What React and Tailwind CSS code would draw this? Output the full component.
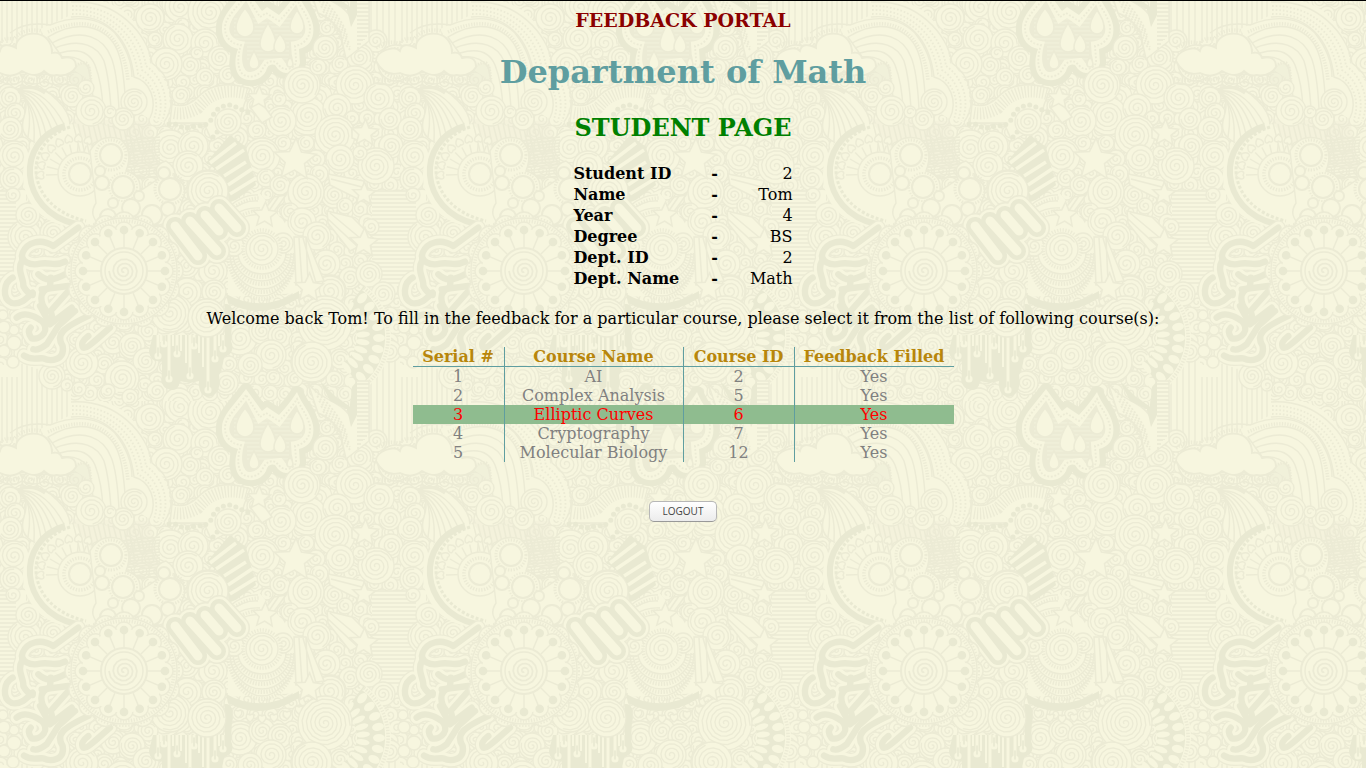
import React from "react";

const BASE = "#f7f6df";
const LINE = "#ecebd5";
const DEEP = "#e9e9d2";

const spirals = [
  [150, 17, 14], [180, 6, 15], [210, 11, 22], [155, 38, 7], [182, 24, 7], [178, 38, 15], [205, 42, 14],
  [190, 64, 11], [166, 63, 16], [220, 57, 12], [205, 76, 9], [228, 74, 9], [197, 52, 6], [183, 81, 7], [181, 94, 9],
  [205, 92, 8], [222, 88, 6],
  [325, 45, 13], [327, 27, 8], [376, 40, 11], [340, 63, 8], [360, 56, 13], [316, 66, 9], [336, 82, 7],
  [302, 82, 19], [355, 84, 19], [379, 97, 15], [318, 96, 14], [308, 115, 19], [337, 107, 14], [281, 120, 15],
  [279, 98, 7], [390, 118, 11], [352, 117, 7], [391, 145, 12], [376, 165, 18], [335, 134, 20], [257, 129, 9],
  [283, 142, 8], [306, 142, 8], [237, 137, 11], [262, 155, 18], [340, 158, 14], [316, 158, 9], [360, 152, 7],
  [266, 177, 9], [280, 184, 10], [319, 173, 9], [334, 194, 13], [306, 191, 18], [267, 193, 6], [290, 211, 9],
  [302, 221, 14], [317, 235, 14], [345, 205, 8], [371, 226, 8], [283, 242, 11], [234, 245, 11], [345, 262, 8],
  [326, 263, 14], [350, 277, 11], [369, 273, 13], [383, 293, 12], [330, 290, 16], [228, 285, 8], [213, 270, 14],
  [187, 265, 12], [187, 291, 14], [214, 291, 12], [10, 97, 11], [15, 112, 10], [10, 128, 12], [14, 155, 15],
  [12, 178, 12], [13, 194, 7], [25, 236, 17], [53, 232, 13], [28, 214, 12], [170, 147, 18], [193, 145, 15],
  [188, 165, 15], [190, 208, 10], [208, 190, 21], [173, 313, 20], [165, 319, 17], [148, 330, 10], [207, 317, 19],
  [240, 337, 17], [262, 330, 13], [280, 335, 12], [298, 340, 9], [271, 354, 15], [250, 364, 12], [229, 363, 8],
  [226, 382, 12], [298, 347, 7], [312, 361, 21], [295, 378, 8], [340, 358, 10], [334, 378, 8], [273, 376, 7],
  [113, 341, 12], [132, 345, 13], [146, 360, 13], [104, 363, 10], [82, 362, 16], [52, 375, 13], [67, 384, 6],
  [79, 388, 7], [122, 377, 17], [108, 390, 7], [130, 396, 8], [145, 384, 7], [157, 390, 10], [178, 403, 16], [390, 350, 11],
];

const stars = [
  [259, 97, 12], [365, 132, 14], [295, 159, 22], [364, 193, 12], [265, 214, 13], [364, 242, 15], [309, 287, 15],
];

const bubbles = [
  [111, 154, 11], [123, 186, 11], [102, 182, 7], [100, 170, 5], [131, 207, 9], [113, 202, 5],
  [108, 216, 8], [139, 195, 5], [152, 214, 10], [168, 208, 7], [170, 188, 11], [164, 172, 6],
];

const hearts = Array.from({ length: 12 }, (_, i) => 88 + i * 16);

const tubes = [
  "M235 50 L160 105 C120 80 80 95 68 125 C58 150 90 165 120 158 C150 152 165 168 195 152",
  "M38 200 C10 215 5 262 35 276 C62 282 80 262 98 245",
  "M68 145 C48 180 72 200 70 225 Q80 245 98 252",
  "M115 190 C140 215 165 205 195 190",
  "M152 200 L150 230 C112 240 122 280 140 300",
  "M50 320 C70 302 100 312 125 330 C152 355 125 388 95 382 Q80 362 92 350",
  "M205 240 L152 300 L160 330",
  "M125 235 L205 225",
  "M120 285 L150 340 L215 290",
  "M265 315 C190 350 165 370 188 405 C195 450 150 452 130 442 C110 440 95 450 72 434",
  "M225 300 L175 345 L140 400 Q115 420 100 415",
  "M330 350 C290 385 260 415 250 410 Q238 395 265 375",
];

const fingers = "M175 225L198 255M190 220L217 250M205 214L219 230M219 207L237 227";

const drips = [[158, 355], [164, 343], [169, 378], [177, 353], [190, 375], [194, 345], [208, 389], [215, 358], [223, 348]];

const drops = [[245, 27, 9, 7], [297, 26, 7, 9], [268, 43, 8, 22], [280, 46, 6, 33], [254, 63, 5, 50], [290, 63, 3, 56]];

function spiralPath(cx, cy, r) {
  const pitch = r > 12 ? 4.3 : 3.6;
  const turns = (r - 1) / pitch;
  const steps = Math.ceil(turns * 14);
  const start = (cx * 7 + cy * 3) % 6;
  let d = "";
  for (let i = 3; i <= steps; i++) {
    const t = (i / 14) * Math.PI * 2;
    const q = Math.min(r, (t / (Math.PI * 2)) * pitch);
    d += `${d ? "L" : "M"}${(cx + q * Math.cos(t + start)).toFixed(1)} ${(cy + q * Math.sin(t + start)).toFixed(1)}`;
  }
  return d;
}

function starPath(cx, cy, r) {
  return (
    Array.from({ length: 10 }, (_, i) => {
      const a = -Math.PI / 2 + (i * Math.PI) / 5 + 0.05;
      const q = i % 2 ? r * 0.46 : r;
      return `${i ? "L" : "M"}${(cx + q * Math.cos(a)).toFixed(1)} ${(cy + q * Math.sin(a)).toFixed(1)}`;
    }).join("") + "Z"
  );
}

function Spiral({ c: [x, y, r] }) {
  return (
    <g fill={BASE} stroke={LINE} strokeWidth="1.3">
      <circle cx={x} cy={y} r={r} />
      <path d={spiralPath(x, y, r - 1)} fill="none" />
    </g>
  );
}

function Filler() {
  const items = [];
  for (let row = 0; row < 31; row++) {
    for (let col = 0; col < 27; col++) {
      items.push([col * 15 + (row % 2 ? 7 : 0), row * 13 + ((col * 5) % 4), 8]);
    }
  }
  return items.map((c) => <Spiral key={c.join()} c={c} />);
}

function Stripes() {
  const vertical = [];
  for (let x = 2; x < 72; x += 5) vertical.push(x);
  const horizontal = [];
  for (let y = 190; y < 286; y += 4) horizontal.push(y);
  return (
    <g stroke={LINE} strokeWidth="1.3">
      <path fill={BASE} stroke="none" d="M0 0H71V42H0ZM0 364H20V352L60 362 71 390V400H0ZM369 0H400V45H369ZM369 345H400V400H369ZM0 190H26V285H0ZM372 190H400V285H372Z" />
      {vertical.map((x) => (
        <path key={x} d={`M${x} 0V42M${x} ${x < 20 ? 376 : 362 + (x - 20) / 3}V400`} />
      ))}
      {[371, 377, 383, 389, 395].map((x) => (
        <path key={x} d={`M${x} 0V45M${x} 350V400`} />
      ))}
      {horizontal.map((y) => (
        <path key={y} d={`M0 ${y}H${y < 240 ? 16 : 20}M372 ${y}H400`} />
      ))}
    </g>
  );
}

function Rainbow() {
  return (
    <g fill="none" stroke={LINE} strokeWidth="1.4">
      <path fill={BASE} stroke="none" d="M71 0H100C132 6 148 36 150 62C168 76 176 100 164 122L146 116 60 60 40 28 71 14Z" />
      <path d="M71 1C118 -2 148 34 152 62C170 74 178 102 164 121" />
      <path d="M71 16C108 12 130 40 134 76C150 80 158 100 150 117" />
      {["M72 5C116 4 142 36 146 65C164 77 170 102 162 120", "M72 9C112 8 138 38 142 69C158 79 165 102 158 119", "M72 13C110 11 134 40 138 73C154 82 160 102 154 118"].map((d) => (
        <path key={d} d={d} strokeDasharray="1.6 2" strokeWidth="1.8" />
      ))}
      <path d="M10 32Q25 20 50 24Q90 8 115 32Q132 54 132 76" />
      <path d="M48 31Q90 12 112 37Q126 54 128 80" strokeWidth="3.5" strokeDasharray="1.2 1.5" />
      <path fill={BASE} d="M48 36C84 14 112 30 119 54Q124 68 126 110H94Q92 80 88 66Q80 54 62 56Z" />
      <path d="M52 42C84 25 104 38 111 56Q117 70 119 108M55 47C82 36 98 46 104 60Q109 76 111 108M60 52C80 46 90 52 95 64Q102 82 103 108" />
      <path fill={LINE} d="M72 70Q80 58 90 66L91 88Q78 90 70 78Z" opacity=".5" />
      <path d="M68 76Q76 60 86 62Q91 66 91 86" strokeWidth="3" strokeDasharray="1.2 1.5" />
      <path fill={BASE} d="M-24 60C-24 50 -6 44 0 50Q2 40 16 47C14 30 52 24 52 52Q60 50 62 57Q76 54 76 66Q70 76 56 74Q50 76 44 70Q36 78 22 70Q12 78 0 72Q-16 76 -24 60Z" strokeWidth="1.8" />
      <path d="M-26 77Q-10 82 0 76Q12 82 22 75Q36 82 44 75Q58 82 70 76" strokeWidth="3.5" strokeDasharray="1.2 1.5" />
      <path d="M-26 82Q-10 86 0 80Q12 87 22 80Q34 86 44 80Q60 88 70 80" />
      <path d="M-24 47Q-12 38 0 43Q2 36 14 38Q24 26 42 30" strokeWidth="3.5" strokeDasharray="1.2 1.5" />
    </g>
  );
}

function Swirl() {
  return (
    <g fill={BASE} stroke={LINE} strokeWidth="1.4">
      <path d="M18 88Q40 80 58 100Q70 112 70 124L36 142Q18 134 24 116Q30 96 18 88Z" />
      <path fill="none" d="M18 90Q44 86 64 123M18 90Q40 88 58 126M18 90Q40 94 52 129M18 91Q38 98 46 133M20 92Q36 104 41 137M22 95Q36 108 34 140M26 98Q32 112 28 136M20 86Q52 84 68 110" />
      <path fill="none" strokeWidth="3" d="M18 89Q32 83 45 92" />
    </g>
  );
}

function Gear() {
  return (
    <g stroke={LINE} fill={BASE} strokeWidth="1.4">
      <path stroke="none" d="M66 124A48 48 0 0 0 82 225L120 215 125 130 90 120Z" />
      <path fill={LINE} stroke="none" opacity=".35" d="M70 118L150 120 160 170 100 160Z" />
      {Array.from({ length: 14 }, (_, i) => (
        <path key={i} fill="none" d={`M${73 + i * 5} ${122 + (i % 3)}L${80 + i * 5} ${150 + (i % 4) * 3}M${122} ${140 + i * 3}L160 ${136 + i * 3}`} />
      ))}
      <path fill="none" stroke={DEEP} strokeWidth="6" d="M65 125C15 139 18 210 76 223" />
      <path fill="none" stroke={DEEP} strokeWidth="3" strokeDasharray="3 2" d="M70 126C21 142 24 206 86 220" />
      {hearts.map((a) => (
        <g key={a} transform={`translate(76 173) rotate(${a})`}>
          <path d="M0 18V30M0 40C-6 36 -4 30 0 33C4 30 6 36 0 40Z" />
        </g>
      ))}
      <circle cx="80" cy="173" r="22" />
      <circle cx="80" cy="173" r="16" fill="none" strokeWidth="3.5" strokeDasharray="1.3 1.5" />
      <circle cx="80" cy="173" r="11" strokeWidth="2" />
      <path d="M90 150Q100 132 120 138Q134 150 126 170Q142 174 140 190L158 178Q152 164 166 160Q178 168 174 176Q190 184 182 200Q178 218 160 224L100 224Q88 214 96 202Z" />
      <circle cx="111" cy="154" r="15" fill="none" strokeWidth="3" strokeDasharray="1.3 1.5" />
      <circle cx="170" cy="188" r="15" fill="none" strokeWidth="3" strokeDasharray="1.3 1.5" />
      <circle cx="123" cy="186" r="14" fill="none" strokeWidth="2" strokeDasharray="1.3 1.5" />
      {bubbles.map(([x, y, r]) => (
        <circle key={`${x}-${y}`} cx={x} cy={y} r={r} strokeWidth="2" />
      ))}
    </g>
  );
}

function Flower() {
  const petals = Array.from({ length: 16 }, (_, i) => i * 22.5);
  return (
    <g transform="translate(124 270)" fill={BASE} stroke={LINE} strokeWidth="1.4">
      {petals.map((a) => (
        <circle key={a} cx="0" cy="-48" r="11" transform={`rotate(${a})`} />
      ))}
      <circle r="53" />
      <circle r="55" fill="none" strokeWidth="2" strokeDasharray="1.3 1.8" />
      <circle r="50" fill="none" strokeWidth="3.5" strokeDasharray="1.2 1.5" />
      {petals.map((a) => (
        <circle key={a} cx="0" cy="-40" r="9" transform={`rotate(${a})`} />
      ))}
      <circle r="42" stroke="none" />
      {petals.map((a) => (
        <g key={a} transform={`rotate(${a})`}>
          <path d="M0 -24V-38" />
          <circle cx="0" cy="-41" r="4.3" fill={DEEP} stroke="none" />
        </g>
      ))}
      <circle r="23" strokeWidth="2" />
      <circle r="19" />
      <path d={spiralPath(0, 0, 16)} fill="none" strokeWidth="1.7" />
    </g>
  );
}

function Raindrops() {
  const outline = "M246 -12C236 2 222 14 222 26C221 38 228 46 238 48C234 58 234 72 242 77C252 82 262 78 266 70Q268 62 275 64Q280 72 286 72Q298 72 300 62L299 48C310 46 315 36 313 24C310 10 302 4 297 -9Q290 2 279 14L267 6 262 10Z";
  const dots = "M246 -6C238 6 225 16 225 27C225 36 231 43 241 44C237 56 237 70 244 74C252 78 260 74 263 67Q268 58 276 61Q282 69 288 68Q297 66 296 58L295 45C306 43 311 34 310 25C307 13 300 6 297 -2Q290 9 279 20L266 12 260 16Z";
  const inner = "M246 1C240 10 230 18 230 28Q231 39 246 40C242 52 241 66 248 70C256 72 260 64 264 58L282 56 288 64Q294 62 291 54L290 40C302 40 306 32 304 25Q299 14 296 5L280 27 267 18 258 24Z";
  return (
    <g fill={BASE} stroke={DEEP}>
      <path d={outline} strokeWidth="12" strokeLinejoin="round" />
      <path d={outline} stroke="none" />
      <path d={dots} fill="none" stroke={LINE} strokeWidth="1.8" strokeDasharray="1.8 1.8" />
      <path d={inner} fill={LINE} stroke={LINE} strokeWidth="1.5" />
      {Array.from({ length: 11 }, (_, i) => (
        <path key={i} d={`M${i < 7 ? 234 : 247} ${18 + i * 4}H${i < 6 ? 302 : 289}`} stroke={BASE} strokeWidth=".8" opacity=".7" />
      ))}
      {drops.map(([x, y, r, top]) => (
        <path key={x} stroke={LINE} strokeWidth="1.5" d={`M${x} ${top}Q${x + r} ${y - r} ${x + r} ${y}A${r} ${r} 0 0 1 ${x - r} ${y}Q${x - r} ${y - r} ${x} ${top}Z`} />
      ))}
      <path stroke={LINE} strokeWidth="1.4" d="M308 -18C320 0 345 0 352 20L356 -20H369V40L346 58 340 30Q330 16 318 12Z" />
      <path fill={DEEP} stroke="none" d="M320 -20L330 0 347 8 351 26 357 14V-20L352 -14 350 6 336 -4Z" />
      {[0, 1, 2, 3, 4, 5].map((i) => (
        <path key={i} fill="none" stroke={LINE} strokeWidth="1.8" strokeDasharray="2 2" d={`M${315 + i * 2} ${-10 + i * 5}Q${334 + i} ${6 + i * 6} ${346 + i} ${30 + i * 4}M${358 + i * 2} -18V${48 - i * 3}`} />
      ))}
    </g>
  );
}

function Arches() {
  return (
    <g fill="none" stroke={LINE} strokeWidth="1.4">
      <path fill={BASE} d="M172 103Q184 108 196 98Q216 76 250 88L244 104 238 126 212 140 204 122H170Z" />
      <path d="M174 112Q186 114 198 107Q216 84 248 93" strokeWidth="12" strokeDasharray="1.2 1.8" />
      <path stroke={DEEP} strokeWidth="5" strokeLinecap="round" strokeDasharray="0 6.5" d="M169 123Q178 122 184 128Q196 124 204 125L211 119Q216 104 231 104L252 113M213 136L218 130" />
      <Spiral c={[228, 121, 13]} />
      <path stroke="none" fill={DEEP} d="M206 162L230 134 246 146 256 184 230 203Q226 172 206 162Z" />
      <path stroke={BASE} strokeWidth="3.5" d="M210 162L236 142M216 168L244 149M224 175L246 161M228 184L252 168M230 193L256 177" />
      <Spiral c={[208, 190, 20]} />
      <path stroke="none" fill={BASE} d="M228 202L258 190 300 240V292L228 296Z" />
      <path d="M230 205Q244 193 258 194M230 210Q244 199 258 200M238 220Q248 212 262 214M234 214Q246 206 260 207" />
      <path strokeWidth="3.5" strokeDasharray="1.2 1.6" d="M232 208Q246 197 260 197M236 218Q248 209 262 210" />
      {[[33, 46], [34, 39], [31, 31], [26, 24]].map(([rx, r]) => (
        <g key={r}>
          <path d={`M${262 - rx} 252A${rx + 3} ${r + 3} 0 0 0 ${262 + rx} 252`} fill={BASE} />
          <path d={`M${262 - rx} 252A${rx} ${r} 0 0 0 ${262 + rx} 252`} fill={BASE} strokeWidth="4" strokeDasharray="1.3 1.5" />
          <path d={`M${264 - rx} 252A${rx - 2} ${r - 3} 0 0 0 ${260 + rx} 252`} fill={BASE} />
        </g>
      ))}
      <Spiral c={[234, 245, 10]} />
      <Spiral c={[283, 242, 10]} />
      <path stroke={LINE} strokeWidth="26" strokeLinecap="round" strokeLinejoin="round" d={fingers} />
      <path stroke={BASE} strokeWidth="23" strokeLinecap="round" d={fingers} />
      <path stroke={DEEP} strokeWidth="18" strokeLinecap="round" d={fingers} />
      <path stroke={BASE} strokeWidth="9" strokeLinecap="round" d={fingers} />
      <path fill={DEEP} stroke="none" d="M226 293Q262 313 299 290L299 297Q262 320 228 302Z" />
      <circle cx="262" cy="248" r="19" fill={BASE} strokeWidth="3.5" strokeDasharray="1.2 1.6" />
      <Spiral c={[262, 248, 16]} />
      {[238, 250, 262, 274, 287, 299, 309].map((x, i) => (
        <path key={x} fill={BASE} transform={`translate(${x} ${[312, 316, 317, 316, 313, 308, 303][i]})`} d="M0 5C-6 1 -4 -5 0 -2C4 -5 6 1 0 5Z" />
      ))}
    </g>
  );
}

function Trails() {
  return (
    <g fill={BASE} stroke={LINE} strokeWidth="1.5">
      <path d="M250 106L259 98 272 116 262 122ZM328 173L364 180 362 200 330 184ZM331 178L362 186M327 210L352 216 374 238 350 250 328 222ZM330 212L366 242M328 218L358 246M294 236L306 236 324 280 296 284ZM299 237L302 282M306 237L308 280M303 237L316 282M274 196L286 194 270 216 262 212ZM279 195L266 214M352 128L366 122 360 140 352 137Z" />
      {stars.map((s) => (
        <path key={s.join()} d={starPath(...s)} />
      ))}
      <circle cx="396" cy="62" r="18" />
      <circle cx="396" cy="62" r="14" fill="none" strokeWidth="4" strokeDasharray="1.3 1.6" />
      <circle cx="396" cy="62" r="9" strokeWidth="2" />
    </g>
  );
}

function Tubes() {
  return (
    <g fill="none" strokeLinecap="round" strokeLinejoin="round">
      <g transform="translate(0 210) scale(.33333)">
        {tubes.map((d) => <path key={d} d={d} stroke={LINE} strokeWidth="44" />)}
        {tubes.map((d) => <path key={d} d={d} stroke={BASE} strokeWidth="37" />)}
        {tubes.map((d) => <path key={d} d={d} stroke={DEEP} strokeWidth="19" />)}
      </g>
      {[[4, 350, 6], [14, 342, 7], [14, 329, 5], [4, 326, 6], [13, 361, 6], [3, 314, 5]].map(([x, y, r]) => (
        <circle key={`${x}-${y}`} cx={x} cy={y} r={r} fill={BASE} stroke={LINE} strokeWidth="1.5" />
      ))}
    </g>
  );
}

function Drips() {
  return (
    <g>
      <path fill={DEEP} d="M153 334H225V303Q234 302 232 318L231 340Q236 352 224 356Q222 370 219 374Q222 394 208 396Q198 394 199 380L190 382 180 380Q178 392 168 388Q160 386 162 372L162 360Q150 362 149 350Z" />
      <path d="M161 334V341M173 334V345M181 334V350M186 334V362M199 334V352M203 334V366M219 334V345" stroke={BASE} strokeWidth="2" />
      {drips.map(([x, y]) => (
        <g key={x}>
          <path d={`M${x} 334V${y}`} stroke={BASE} strokeWidth="3" />
          <circle cx={x} cy={y} r="3.6" fill={BASE} />
          <path d={`M${x} ${y - 8}V${y}`} stroke={DEEP} strokeWidth="1.6" strokeLinecap="round" />
        </g>
      ))}
      <Spiral c={[170, 312, 19]} />
      <Spiral c={[207, 317, 19]} />
    </g>
  );
}

function Fan() {
  const angles = Array.from({ length: 10 }, (_, i) => -52 + i * 12);
  return (
    <g transform="translate(326 336)">
      <path d="M28 -38A47 47 0 0 1 26 39" fill="none" stroke={DEEP} strokeWidth="32" />
      <path d="M38 -49A62 62 0 0 1 34 52" fill="none" stroke={BASE} strokeWidth="6" />
      <path d="M38 -49A62 62 0 0 1 34 52" fill="none" stroke={LINE} strokeWidth="3.5" strokeDasharray="1.3 1.6" />
      {angles.map((a) => (
        <g key={a} fill={BASE}>
          <ellipse cx="37" cy="0" rx="7" ry="3" transform={`rotate(${a})`} />
          <ellipse cx="53" cy="0" rx="6" ry="4" transform={`rotate(${a + 5})`} />
        </g>
      ))}
      <g transform="translate(-326 -336)">
        <Spiral c={[330, 290, 15]} />
        <Spiral c={[325, 322, 27]} />
        <Spiral c={[312, 361, 20]} />
      </g>
    </g>
  );
}

function Doodles() {
  return (
    <svg className="absolute inset-0 -z-10 h-full w-full" aria-hidden="true">
      <defs>
        <g id="motifs">
          {spirals.map((c) => <Spiral key={c.join()} c={c} />)}
          <Swirl />
          <Rainbow />
          <Gear />
          {[[72, 95, 11], [86, 87, 8], [134, 101, 13], [91, 110, 15], [123, 118, 11], [110, 111, 6]].map((c) => <Spiral key={c.join()} c={c} />)}
          <Arches />
          <Fan />
          <Trails />
          <Tubes />
          <Drips />
          <Flower />
          <Raindrops />
          <Spiral c={[302, 84, 18]} />
          <Spiral c={[325, 47, 12]} />
          <Spiral c={[318, 66, 8]} />
          <g transform="translate(0 400)"><Raindrops /></g>
        </g>
        <pattern id="doodles" width="400" height="400" patternUnits="userSpaceOnUse">
          <rect width="400" height="400" fill={BASE} />
          <Filler />
          <Stripes />
          <use href="#motifs" y="-400" />
          <use href="#motifs" x="-400" />
          <use href="#motifs" />
          <use href="#motifs" x="400" />
        </pattern>
      </defs>
      <rect width="100%" height="100%" fill="url(#doodles)" />
    </svg>
  );
}

const student = [
  ["Student ID", "2"],
  ["Name", "Tom"],
  ["Year", "4"],
  ["Degree", "BS"],
  ["Dept. ID", "2"],
  ["Dept. Name", "Math"],
];

const courses = [
  [1, "AI", 2, "Yes"],
  [2, "Complex Analysis", 5, "Yes"],
  [3, "Elliptic Curves", 6, "Yes"],
  [4, "Cryptography", 7, "Yes"],
  [5, "Molecular Biology", 12, "Yes"],
];

const headCell = "border-b border-[#5f9ea0] p-0 font-bold";

export default function App() {
  return (
    <div className="relative isolate flex min-h-screen flex-col items-center border-t border-black bg-[#f7f6df] px-2 pt-2 text-center font-['DejaVu_Serif',serif] text-[16px] leading-[19px] text-black">
      <Doodles />
      <h3 className="text-[19px] leading-[22px] font-bold text-[#8b0000]">FEEDBACK PORTAL</h3>
      <h1 className="mt-[22px] text-[32px] leading-[38px] font-bold text-[#5f9ea0]">Department of Math</h1>
      <h2 className="mt-[22px] text-[24px] leading-[30px] font-bold text-[#008000]">STUDENT PAGE</h2>

      <table className="mt-5 leading-[21px]">
        <tbody>
          {student.map(([label, value]) => (
            <tr key={label}>
              <th scope="row" className="p-0 text-left font-bold">{label}</th>
              <td className="px-8 py-0 font-bold">-</td>
              <td className="p-0 text-right">{value}</td>
            </tr>
          ))}
        </tbody>
      </table>

      <p className="mt-5">
        Welcome back Tom! To fill in the feedback for a particular course, please select it from the list of following course(s):
      </p>

      <table className="mt-[19px] w-[541px] table-fixed border-separate border-spacing-0 text-center">
        <colgroup>
          <col className="w-[92px]" />
          <col className="w-[179px]" />
          <col className="w-[111px]" />
          <col className="w-[159px]" />
        </colgroup>
        <thead className="text-[#b8860b]">
          <tr>
            <th scope="col" className={`${headCell} border-r`}>Serial #</th>
            <th scope="col" className={`${headCell} border-r`}>Course Name</th>
            <th scope="col" className={`${headCell} border-r`}>Course ID</th>
            <th scope="col" className={headCell}>Feedback Filled</th>
          </tr>
        </thead>
        <tbody>
          {courses.map(([serial, name, id, filled]) => (
            <tr key={serial} className={serial === 3 ? "cursor-pointer bg-[#8fbc8f] text-[#ff0000]" : "cursor-pointer text-[#808080]"}>
              <td className="border-r border-[#5f9ea0] p-0">{serial}</td>
              <td className="border-r border-[#5f9ea0] p-0">{name}</td>
              <td className="border-r border-[#5f9ea0] p-0">{id}</td>
              <td className="p-0">{filled}</td>
            </tr>
          ))}
        </tbody>
      </table>

      <button
        type="button"
        className="mt-[39px] cursor-pointer rounded-[5px] border border-[#b7b7b7] border-b-[#999999] bg-linear-to-b from-white to-[#ececec] px-[13px] font-['Open_Sans',sans-serif] text-[10px] leading-[19px] text-[#444444]"
      >
        LOGOUT
      </button>
    </div>
  );
}
